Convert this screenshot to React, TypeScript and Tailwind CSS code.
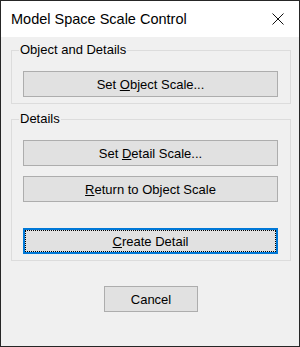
import React from 'react';

const font = { fontFamily: '"Liberation Sans", Arial, sans-serif' };

// Plain Win32-style push button
const PushButton: React.FC<{ children: React.ReactNode; className?: string }> = ({ children, className = '' }) => (
  <button
    className={`h-[26px] bg-[#e1e1e1] border border-[#adadad] text-[13px] text-black leading-none flex items-center justify-center ${className}`}
  >
    {children}
  </button>
);

const App: React.FC = () => {
  return (
    <div
      className="w-[300px] h-[347px] border border-[#262626] bg-[#f0f0f0] flex flex-col select-none"
      style={font}
    >
      {/* Title bar */}
      <div className="h-[36px] bg-white flex items-center justify-between pl-[10px] pr-[15px]">
        <span className="text-[14.5px] leading-[20px] text-black">Model Space Scale Control</span>
        <svg width="12" height="12" viewBox="0 0 12 12" className="shrink-0">
          <path d="M0.5 0.5 L11.5 11.5 M11.5 0.5 L0.5 11.5" stroke="#111" strokeWidth="1" />
        </svg>
      </div>

      <div className="pl-[10px] flex flex-col">
        {/* Object and Details */}
        <fieldset className="w-[280px] mt-[5px] border border-[#dcdcdc] pb-[6px]">
          <legend className="ml-[7px] px-[1px] text-[13px] leading-[16px] text-black">Object and Details</legend>
          <PushButton className="w-[255px] ml-[11px] mt-[13px]">
            Set&nbsp;<u>O</u>bject Scale...
          </PushButton>
        </fieldset>

        {/* Details */}
        <fieldset className="w-[280px] mt-[7px] border border-[#dcdcdc] pb-[6px]">
          <legend className="ml-[7px] px-[1px] text-[13px] leading-[16px] text-black">Details</legend>
          <div className="flex flex-col ml-[11px] mt-[13px]">
            <PushButton className="w-[255px]">
              Set&nbsp;<u>D</u>etail Scale...
            </PushButton>
            <PushButton className="w-[255px] mt-[10px]">
              <u>R</u>eturn to Object Scale
            </PushButton>
            <button className="w-[255px] h-[26px] mt-[26px] bg-[#e1e1e1] border-2 border-[#0078d7] text-[13px] text-black leading-none flex">
              <span className="flex-1 border border-dotted border-black flex items-center justify-center">
                <u>C</u>reate Detail
              </span>
            </button>
          </div>
        </fieldset>

        <div className="w-[280px] flex justify-center mt-[25px]">
          <PushButton className="w-[94px]">Cancel</PushButton>
        </div>
      </div>
    </div>
  );
};

export default App;
